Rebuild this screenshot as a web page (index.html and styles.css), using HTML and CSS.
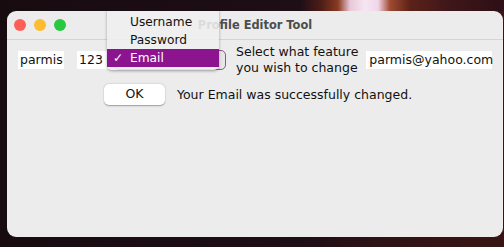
FILE: index.html
```html
<!DOCTYPE html>
<html>
<head>
<meta charset="utf-8">
<link rel="stylesheet" href="styles.css">
</head>
<body>
<div class="desk">
  <div class="window">
    <div class="titlebar">
      <div class="lights">
        <span class="light red"></span>
        <span class="light yellow"></span>
        <span class="light green"></span>
      </div>
      <div class="title">Profile Editor Tool</div>
    </div>
    <div class="content">
      <div class="row">
        <div class="field f-user">parmis</div>
        <div class="field f-pass">123</div>
        <div class="combo"></div>
        <div class="label">Select what feature<br>you wish to change</div>
        <div class="field f-email">parmis@yahoo.com</div>
      </div>
      <div class="row2">
        <div class="btn">OK</div>
        <div class="msg">Your Email was successfully changed.</div>
      </div>
    </div>
    <div class="menu">
      <div class="item">Username</div>
      <div class="item">Password</div>
      <div class="item sel"><span class="check">✓</span>Email</div>
    </div>
  </div>
</div>
</body>
</html>
```
FILE: styles.css
```css
html, body { margin: 0; padding: 0; }
body {
  width: 504px; height: 247px; overflow: hidden;
  background:
    linear-gradient(90deg, rgba(0,0,0,0) 300px, #4a1c16 320px, #8a3a22 338px, #e9c8d8 350px, #f6e6f4 365px, #f0d6e8 378px, #a04a30 390px, #5c2218 410px, #3e161a 450px, #2e1016 500px) 0 0 / 100% 11px no-repeat,
    linear-gradient(90deg, #170b10 0%, #1e0e16 60%, #2e1216 75%, #3a1414 100%);
  font-family: "DejaVu Sans", sans-serif;
  font-size: 12.5px;
  color: #111;
}
.desk { padding: 11px 1px 0 7px; }
.window {
  position: relative;
  height: 226px;
  background: #ececec;
  border-radius: 9px;
  overflow: hidden;
}
.titlebar {
  height: 28px;
  border-bottom: 1px solid #d4d4d4;
  display: flex;
  align-items: center;
  position: relative;
}
.lights { display: flex; gap: 8px; padding-left: 7px; }
.light { width: 12px; height: 12px; border-radius: 50%; display: block; }
.red { background: #fe5f57; }
.yellow { background: #febc2e; }
.green { background: #28c840; }
.title {
  position: absolute; left: 0; right: 0; text-align: center;
  font-weight: bold; color: #4d4d4d; font-size: 11.4px;
}
.content { padding: 4px 0 0 11px; }
.row { display: flex; align-items: center; height: 32px; }
.field {
  background: #fff; height: 18px; line-height: 18px;
  padding: 0 2px; box-sizing: border-box;
}
.f-user { width: 46px; }
.f-pass { width: 34px; margin-left: 13px; }
.combo {
  width: 112px; height: 20px; margin-left: 3px;
  border: 1px solid #8a5b8a; border-radius: 5px; box-sizing: border-box;
  background: #e6e6e6;
}
.label { margin-left: 10px; line-height: 16px; }
.f-email { margin-left: 8px; width: 126px; padding-left: 3px; }
.row2 { display: flex; align-items: center; margin-top: 8px; padding-left: 86px; }
.btn {
  width: 61px; height: 21px; line-height: 20px; text-align: center;
  background: #fff; border-radius: 5px;
  box-shadow: 0 0.5px 1.5px rgba(0,0,0,0.35);
}
.msg { margin-left: 12px; }
.menu {
  position: absolute; left: 100px; top: -1px; width: 112px;
  background: rgba(239,239,239,0.88); border-radius: 0 0 5px 5px;
  box-shadow: 0 1px 3px rgba(0,0,0,0.35);
  padding: 3px 0 3px;
  font-size: 12.2px;
}
.item { height: 18px; line-height: 19px; padding-left: 23px; position: relative; }
.sel { background: #8c158f; color: #fff; }
.check { position: absolute; left: 6px; }
```
